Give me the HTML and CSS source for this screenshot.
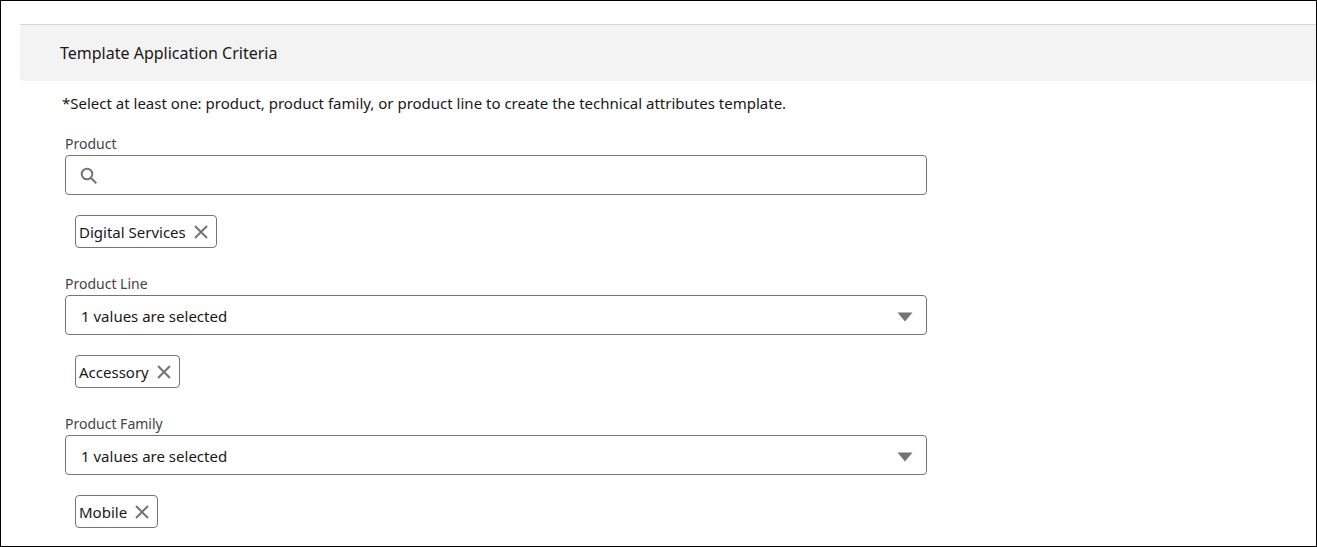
FILE: index.html
```html
<!DOCTYPE html>
<html lang="en">
  <head>
    <meta charset="utf-8">
    <title>Template Application Criteria</title>
    <meta name="viewport" content="width=device-width, initial-scale=1.0">
    <link rel="stylesheet" href="styles.css">
  </head>
  <body>
    <main class="page">
      <section class="section">
        <h2 class="section-title">Template Application Criteria</h2>
        <p class="hint">*Select at least one: product, product family, or product line to create the technical attributes template.</p>

        <form class="criteria">
          <div class="field">
            <label for="product">Product</label>
            <div class="control">
              <input type="text" id="product" class="search-input">
              <svg class="search-icon" viewBox="0 0 18 18" aria-hidden="true">
                <circle cx="7" cy="7" r="5.3"/>
                <path d="M11 11l5.3 5.3"/>
              </svg>
            </div>
            <div class="pill">
              <span>Digital Services</span>
              <button type="button" class="remove" aria-label="Remove Digital Services">
                <svg viewBox="0 0 14 14"><path d="M1 1l12 12M13 1l-12 12"/></svg>
              </button>
            </div>
          </div>

          <div class="field">
            <label for="productLine">Product Line</label>
            <div class="control">
              <select id="productLine">
                <option>1 values are selected</option>
              </select>
              <svg class="arrow" viewBox="0 0 16 10" aria-hidden="true"><path d="M0.5 0.5h15L8 9.5z"/></svg>
            </div>
            <div class="pill">
              <span>Accessory</span>
              <button type="button" class="remove" aria-label="Remove Accessory">
                <svg viewBox="0 0 14 14"><path d="M1 1l12 12M13 1l-12 12"/></svg>
              </button>
            </div>
          </div>

          <div class="field">
            <label for="productFamily">Product Family</label>
            <div class="control">
              <select id="productFamily">
                <option>1 values are selected</option>
              </select>
              <svg class="arrow" viewBox="0 0 16 10" aria-hidden="true"><path d="M0.5 0.5h15L8 9.5z"/></svg>
            </div>
            <div class="pill">
              <span>Mobile</span>
              <button type="button" class="remove" aria-label="Remove Mobile">
                <svg viewBox="0 0 14 14"><path d="M1 1l12 12M13 1l-12 12"/></svg>
              </button>
            </div>
          </div>
        </form>
      </section>
    </main>
  </body>
</html>
```
FILE: styles.css
```css
* {
  box-sizing: border-box;
}
body {
  margin: 0;
  background-color: #fff;
  color: #181818;
  font-family: "Segoe UI", "Noto Sans", sans-serif;
  font-size: 15px;
  line-height: 20px;
}
.page {
  min-height: 100vh;
  padding: 23px 0 16px 19px;
  border: 1px solid #000;
}
.section {
  border-top: 1px solid #d8d8d8;
}
.section-title {
  margin: 0;
  padding: 16px 40px;
  border-radius: 4px 0 0 4px;
  background-color: #f3f3f3;
  font-size: 16px;
  font-weight: 400;
  line-height: 24px;
}
.hint {
  margin: 0;
  padding: 12px 42px;
}
.criteria {
  display: flex;
  flex-direction: column;
  gap: 25px;
  width: 66.5%;
  margin-left: 45px;
  padding-top: 8px;
}
.field {
  display: flex;
  flex-direction: column;
  align-items: flex-start;
}
label {
  color: #444;
  font-size: 14px;
  line-height: 22px;
}
.control {
  position: relative;
  width: 100%;
  height: 40px;
}
.search-input,
select {
  width: 100%;
  height: 100%;
  margin: 0;
  padding: 2px 40px 0 15px;
  border: 1px solid #747474;
  border-radius: 4px;
  background-color: #fff;
  color: #181818;
  font: inherit;
  appearance: none;
}
.search-input {
  padding-left: 40px;
}
.search-icon {
  position: absolute;
  top: 12px;
  left: 15px;
  width: 18px;
  height: 18px;
  fill: none;
  stroke: #747474;
  stroke-width: 2;
  pointer-events: none;
}
.arrow {
  position: absolute;
  top: 17px;
  right: 14px;
  width: 16px;
  height: 10px;
  fill: #747474;
  pointer-events: none;
}
.pill {
  display: flex;
  align-items: center;
  gap: 8px;
  height: 33px;
  margin: 20px 0 0 10px;
  padding: 1px 8px 0 3px;
  border: 1px solid #747474;
  border-radius: 4px;
}
.remove {
  display: flex;
  padding: 0;
  border: none;
  background: none;
  cursor: pointer;
}
.remove svg {
  width: 14px;
  height: 14px;
  fill: none;
  stroke: #747474;
  stroke-width: 2;
}
```
